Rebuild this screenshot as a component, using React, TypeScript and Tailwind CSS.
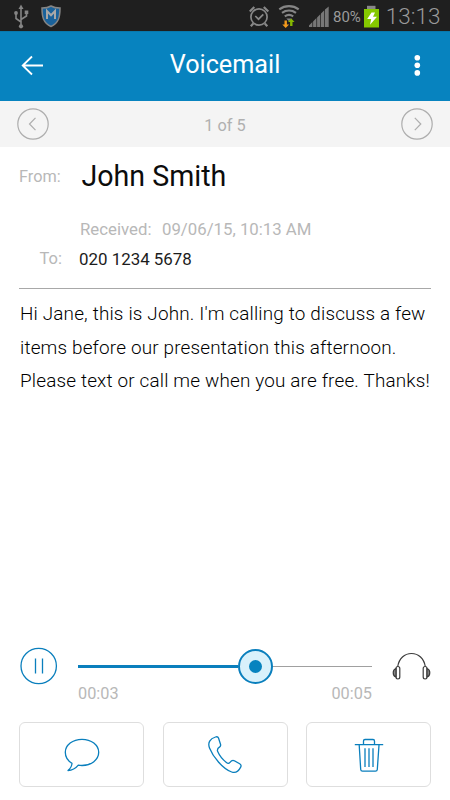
import type { ReactNode } from "react";

function StatusBar() {
  return (
    <div className="flex h-[31px] items-center bg-[#1f1f1f] pl-[13px] text-[#9a9a9a]">
      {/* usb */}
      <svg width="17" height="31" viewBox="13 0 17 31" fill="none" stroke="#858585" strokeWidth="1.6">
        <path d="M21 7v18M21 22l-5-3.5v-5M21 19.5l5.5-3.5v-3" />
        <circle cx="21" cy="26.3" r="2.1" fill="#858585" stroke="none" />
        <path d="M21 4.500l2.500 4.500h-5z" fill="#858585" stroke="none" />
        <circle cx="16" cy="13" r="1.900" fill="#858585" stroke="none" />
        <path d="M24.700 10.500h3.600v3.600h-3.600z" fill="#858585" stroke="none" />
      </svg>
      {/* shield */}
      <svg className="ml-[11px]" width="20" height="31" viewBox="41 0 20 31" fill="none">
        <path d="M51 6c2.800 1.600 5.800 2.100 9 2.100 0 8.600-1.200 14.900-9 18.400-7.800-3.500-9-9.800-9-18.400 3.200 0 6.200-.5 9-2.100z" fill="#1a629b" stroke="#858585" strokeWidth="1.500" />
        <path d="M47 19v-8l4 4.200 4-4.200v8" stroke="#a8a8a8" strokeWidth="2" />
      </svg>
      <div className="flex-1" />
      {/* alarm */}
      <svg width="22" height="31" viewBox="248.200 0 22 31" fill="none" stroke="#888" strokeWidth="1.700">
        <circle cx="259.200" cy="17" r="8.100" />
        <path d="M255.500 16l3.200 3.200 4.800-4.800" />
        <path d="M250 11.500l4.500-4.500M268.500 11.500L264 7M253.500 23.500l-2.500 2.800M265 23.500l2.500 2.800" strokeWidth="2.200" />
      </svg>
      {/* wifi with traffic arrows */}
      <svg className="ml-2" width="22" height="31" viewBox="278.200 0 22 31" fill="none" stroke="#858585" strokeWidth="2.200">
        <path d="M279.500 9.300c5.700-4.300 13.700-4.300 19.400 0" />
        <path d="M282.200 12.900c4.200-3 9.800-3 14 0" />
        <path d="M285 16.300c2.700-1.900 5.700-1.900 8.400 0" />
        <path d="M286.500 18.500h5.400l-2.700 2.700z" fill="#858585" stroke="none" />
        <path d="M284.700 20.500h2.400v4h2.200l-3.400 3.500-3.400-3.500h2.200z" fill="#f39a1d" stroke="none" />
        <path d="M290.300 26h2.400v-4h2.100l-3.300-3.600-3.300 3.600h2.100z" fill="#85b800" stroke="none" />
      </svg>
      {/* signal */}
      <svg className="ml-[8px]" width="21" height="31" viewBox="308 0 21 31" fill="#777">
        <path d="M309 27v-1.500l3.400-3.400V27zM313.100 27v-5.600l3.300-3.300V27zM317.100 27v-9.600l3.200-3.200V27zM321 27V13.500l3.300-3.300V27zM325 27V9.500l3.700-3V27z" />
      </svg>
      <span className="ml-[3.500px] pt-1 text-[15px] leading-none">80%</span>
      {/* battery */}
      <svg className="ml-[3px]" width="15" height="31" viewBox="364 0 15 31">
        <path d="M364 9h15v18.500h-15z" fill="#85c900" />
        <path d="M367 5.800h8.500V9H367z" fill="#888" />
        <path d="M371.500 12.500h3.500l-2 4.300h4l-7 8 1.200-5.800h-4z" fill="#fff" />
      </svg>
      <span className="mr-[9.500px] ml-[7px] pt-0.5 text-[22.500px] leading-none font-light">13:13</span>
    </div>
  );
}

function Header() {
  return (
    <header className="flex h-[70px] items-center justify-between border-t border-[#0879ae] bg-[#0783bf] text-white">
      <svg className="mb-[3px] ml-5" width="26" height="24" viewBox="0 0 26 24" fill="none" stroke="currentColor" strokeWidth="1.800">
        <path d="M23 12.500H2.500M12 3.500l-9.300 9 9.300 9" />
      </svg>
      <h1 className="mb-[3px] text-[25.200px] leading-none">Voicemail</h1>
      <svg className="mr-[20px] mb-[3px]" width="26" height="24" viewBox="0 0 26 24" fill="currentColor">
        <circle cx="13.300" cy="4.700" r="2.800" />
        <circle cx="13.300" cy="12.300" r="2.800" />
        <circle cx="13.300" cy="19.900" r="2.800" />
      </svg>
    </header>
  );
}

function PagerButton({ label, path }: { label: string; path: string }) {
  return (
    <button type="button" aria-label={label}>
      <svg width="32" height="32" viewBox="0 0 32 32" fill="none" stroke="#adadad" strokeWidth="1.200">
        <circle cx="16" cy="16" r="15.200" />
        <path d={path} />
      </svg>
    </button>
  );
}

function ActionButton({ label, children }: { label: string; children: ReactNode }) {
  return (
    <button
      type="button"
      aria-label={label}
      className="flex h-[65px] w-[125px] items-center justify-center rounded-md border border-[#dedede] bg-white"
    >
      <svg width="44" height="44" viewBox="0 0 44 44" fill="none" stroke="#0a7fbd" strokeWidth="1.300" strokeLinejoin="round">
        {children}
      </svg>
    </button>
  );
}

export default function App() {
  return (
    <div className="flex h-[800px] w-[450px] flex-col overflow-hidden bg-white font-[Roboto,sans-serif]">
      <StatusBar />
      <Header />

      <nav className="flex h-[46px] items-center justify-between bg-[#f4f4f4] px-[17px]">
        <PagerButton label="Previous" path="M18.500 9.800L12.500 16l6 6.200" />
        <span className="pt-[4px] text-[16.300px] leading-none text-[#b0b0b0]">1 of 5</span>
        <PagerButton label="Next" path="M13.800 9.800l6 6.200-6 6.200" />
      </nav>

      <section className="mx-[19px] flex h-[142px] flex-col border-b border-[#a8a8a8] pt-[12px] text-[16.500px] text-[#b8b8b8]">
        <div className="flex h-[34px] items-center">
          <span className="w-[62.500px] pt-0.5 text-[16.300px]">From:</span>
          <span className="text-[28.600px] leading-[34px] text-[#0c0c0c]">John Smith</span>
        </div>
        <div className="mt-[25px] flex h-[24px] items-center pl-[61px] text-[16.800px]">
          <span className="w-[82px]">Received:</span>
          <span>09/06/15, 10:13 AM</span>
        </div>
        <div className="mt-[5px] flex h-[24px] items-center pl-[20.500px]">
          <span className="w-[39.500px]">To:</span>
          <span className="pt-px text-[16.900px] leading-none text-[#1c1c1c]">020 1234 5678</span>
        </div>
      </section>

      <p className="mt-[8px] ml-5 text-[18.900px] leading-[33.700px] font-light tracking-[0.170px] whitespace-nowrap text-black">
        Hi Jane, this is John. I'm calling to discuss a few
        <br />
        items before our presentation this afternoon.
        <br />
        Please text or call me when you are free. Thanks!
      </p>

      <div className="mt-auto flex h-[56px] px-5">
        <svg className="shrink-0" width="38" height="38" viewBox="0 0 38 38" fill="none" stroke="#0a7fbd" strokeWidth="1.300">
          <circle cx="18.700" cy="19" r="17.700" />
          <path d="M15.500 11.500v15M22.500 11.500v15" />
        </svg>
        <div className="ml-[20px] w-[294px] shrink-0">
          <div className="flex h-[38px] items-center">
            <div className="h-[3px] w-[160px] bg-[#0a7fbd]" />
            <div className="flex size-[35px] items-center justify-center rounded-full border-2 border-[#0a7fbd] bg-[#d9f1fb]">
              <div className="size-[13px] rounded-full bg-[#0783bf]" />
            </div>
            <div className="h-px flex-1 bg-[#a0a0a0]" />
          </div>
          <div className="flex justify-between text-[16.300px] leading-[18px] text-[#b8b8b8]">
            <span>00:03</span>
            <span>00:05</span>
          </div>
        </div>
        <svg className="ml-[20px] shrink-0" width="40" height="38" viewBox="0 0 40 38" fill="none" stroke="#3c3c3c" strokeWidth="1.200">
          <path d="M5.700 19.500C7 11.500 12.500 6.500 19.500 6.500s12.500 5 13.800 13" />
          <rect x="4" y="19.500" width="3.800" height="12.500" rx="1.900" />
          <rect x="31.200" y="19.500" width="3.800" height="12.500" rx="1.900" />
          <path d="M4 21.500C.3 22.500.3 29 4 30zM35 21.500c3.700 1 3.700 7.500 0 8.500z" fill="#888" />
        </svg>
      </div>

      <footer className="mt-[19px] mb-[13px] flex justify-between px-[19px]">
        <ActionButton label="Reply">
          <path d="M22 6.300c9.300 0 16.700 5.700 16.700 13s-7.400 13.200-16.700 13.200c-1.300 0-2.500-.1-3.700-.3-2.500 3.100-5.300 5.200-10.300 5.300 2.300-1.800 3.800-4 4-7.200C8 28 5.300 24 5.300 19.300c0-7.300 7.400-13 16.700-13z" />
        </ActionButton>
        <ActionButton label="Call">
          <path d="M12.500 4c1.600-.5 2.500-.3 3 1l2 6.200c.4 1.300.2 2-.8 2.700-2.300 1.500-2.900 2.600-2 4.700 1.700 4 5.300 8.300 8.700 11 1.500 1.200 2.400 1.200 3.600-.3 1.600-2 2.500-2.500 4.400-1.500l5.300 3c1.500.9 1.800 1.800 1 3.300-1.900 3.700-5.200 6.300-9 4.900C20 36 10 24 6.500 15 4.500 9.800 7 5.600 12.500 4z" />
        </ActionButton>
        <ActionButton label="Delete">
          <path d="M7.800 11.600h28.400M12.200 12l1.500 24.500c.1 1.100.8 1.700 1.800 1.700h13c1 0 1.700-.6 1.800-1.700L32 12M16.500 11.500V8c0-.9.600-1.500 1.500-1.500h8c.9 0 1.500.600 1.500 1.500v3.500M18 15.300V34M22 15.300V34M26 15.300V34" />
        </ActionButton>
      </footer>
    </div>
  );
}
